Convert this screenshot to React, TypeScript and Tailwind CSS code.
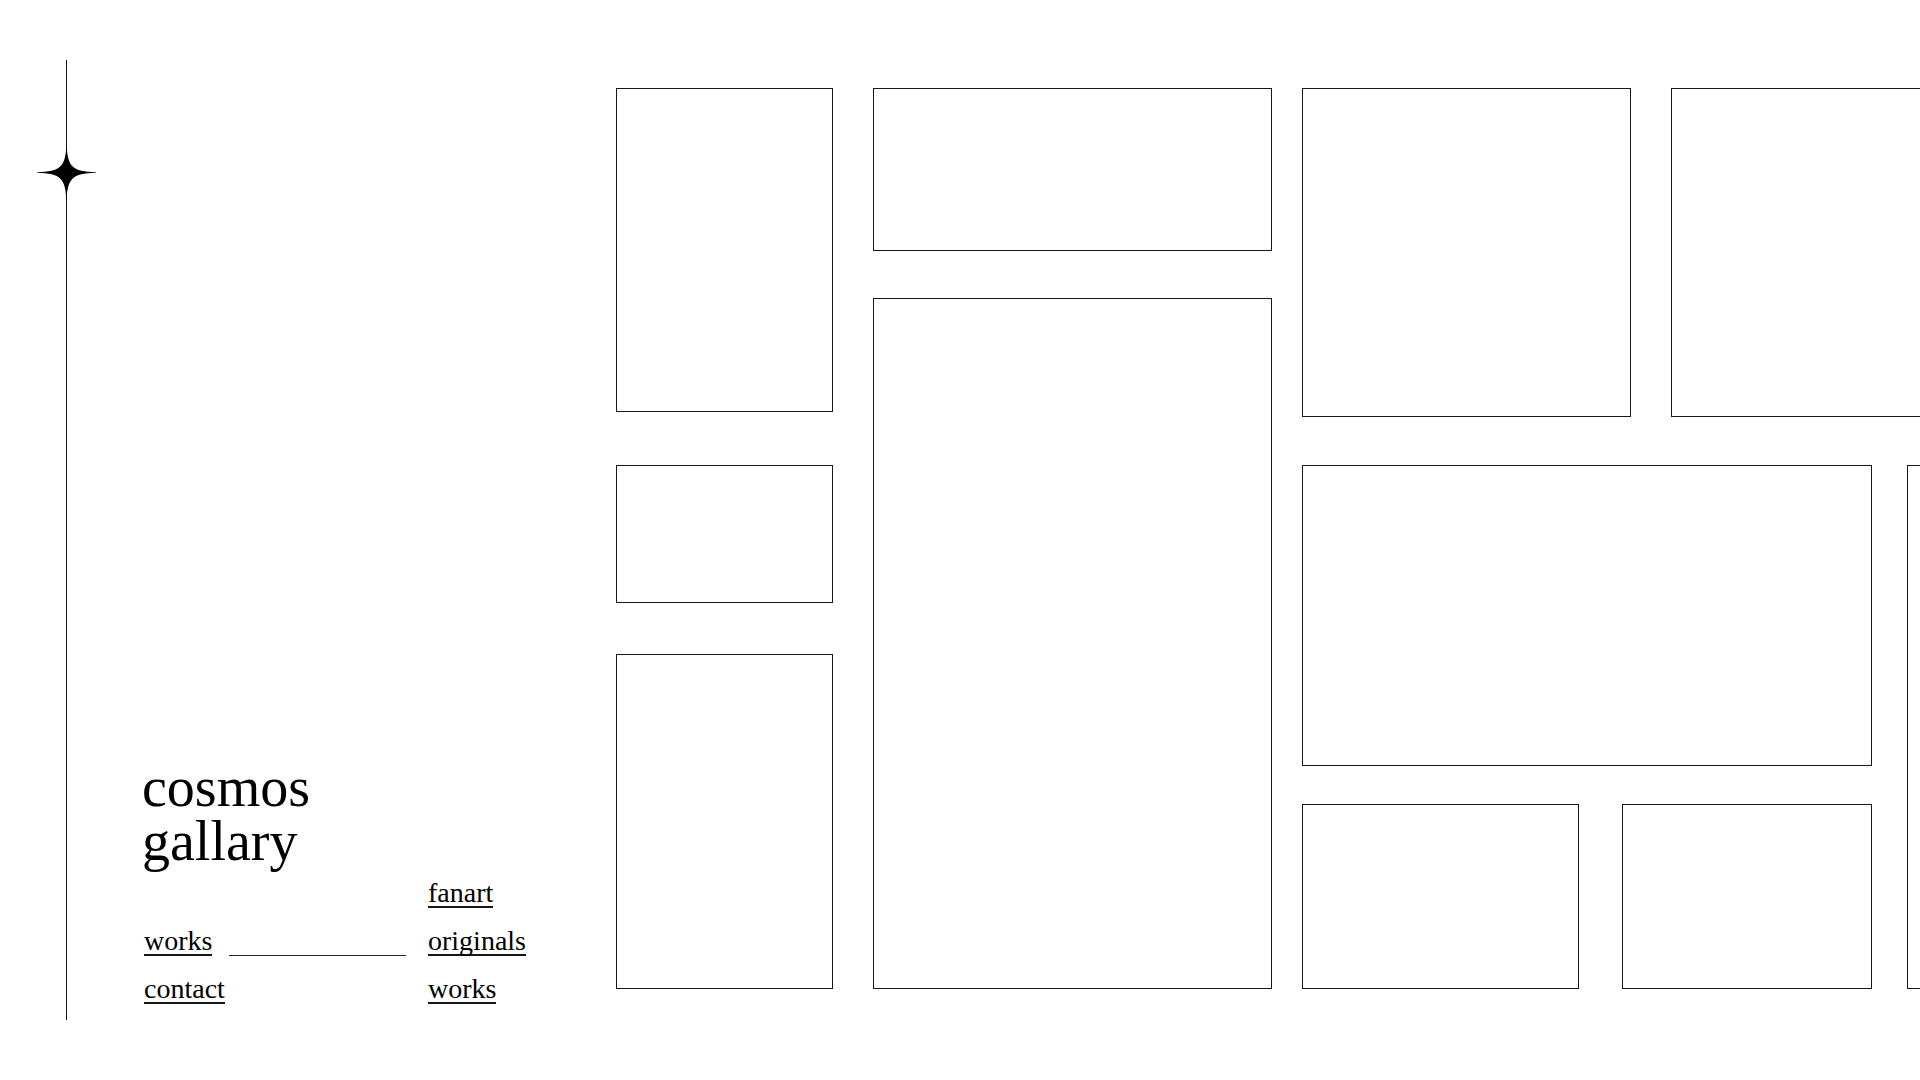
const frame = "border border-neutral-900";
const linkClass = "inline-block h-[30px] border-b-2 border-neutral-900 text-[28px] leading-[30px]";

function Star() {
  return (
    <svg
      className="absolute top-[142px] left-[36px]"
      width="61"
      height="61"
      viewBox="0 0 61 61"
      aria-hidden="true"
    >
      <path
        d="M30.5 1 C31.4 25 36 29.5 60 30.3 V30.7 C36 31.5 31.4 36 30.5 60 C29.6 36 25 31.5 1 30.7 V30.3 C25 29.5 29.6 25 30.5 1 Z"
        fill="black"
      />
      <path
        d="M30.5 13 C32 25 36 29 49 30.5 C36 32 32 36 30.5 48 C29 36 25 32 12 30.5 C25 29 29 25 30.5 13 Z"
        fill="black"
        stroke="black"
        strokeWidth="0.3"
      />
    </svg>
  );
}

function Sidebar() {
  return (
    <aside className="relative flex w-[616px] shrink-0 pl-[66px]">
      <div className="my-[60px] w-px shrink-0 bg-neutral-900" />
      <Star />
      <div className="flex flex-1 flex-col justify-end pb-[76px] pl-[75px]">
        <h1 className="mb-[10px] text-[56px] leading-[54px]">
          cosmos
          <br />
          gallary
        </h1>
        <nav className="grid grid-cols-[284px_1fr] gap-y-[18px] pl-0.5">
          <div className="col-start-2 flex">
            <a href="#fanart" className={linkClass}>fanart</a>
          </div>
          <div className="col-start-1 flex items-end gap-[17px] pr-[22px]">
            <a href="#works" className={linkClass}>works</a>
            <div className="h-px flex-1 bg-neutral-800" />
          </div>
          <div className="flex">
            <a href="#originals" className={linkClass}>originals</a>
          </div>
          <div className="flex">
            <a href="#contact" className={linkClass}>contact</a>
          </div>
          <div className="flex">
            <a href="#original-works" className={linkClass}>works</a>
          </div>
        </nav>
      </div>
    </aside>
  );
}

function Gallery() {
  return (
    <main className="flex min-w-0 flex-1 overflow-hidden pt-[88px] pb-[91px]">
      <section className="mr-10 grid w-[217px] shrink-0 grid-rows-[324fr_53px_138fr_51px_335fr]">
        <div className={`row-start-1 ${frame}`} />
        <div className={`row-start-3 ${frame}`} />
        <div className={`row-start-5 ${frame}`} />
      </section>
      <section className="mr-[30px] grid w-[399px] shrink-0 grid-rows-[163fr_691fr] gap-[47px]">
        <div className={frame} />
        <div className={frame} />
      </section>
      <section className="grid shrink-0 grid-rows-[329fr_524fr] gap-12">
        <div className="flex gap-10">
          <div className={`w-[329px] ${frame}`} />
          <div className={`w-[329px] ${frame}`} />
        </div>
        <div className="flex gap-[35px]">
          <div className="grid w-[570px] grid-rows-[301fr_185fr] gap-[38px]">
            <div className={frame} />
            <div className="grid grid-cols-[277fr_250fr] gap-[43px]">
              <div className={frame} />
              <div className={frame} />
            </div>
          </div>
          <div className={`w-[218px] ${frame}`} />
        </div>
      </section>
    </main>
  );
}

export default function App() {
  return (
    <div className="flex h-screen min-h-[720px] overflow-hidden bg-white font-['Liberation_Serif',serif] text-black">
      <Sidebar />
      <Gallery />
    </div>
  );
}
